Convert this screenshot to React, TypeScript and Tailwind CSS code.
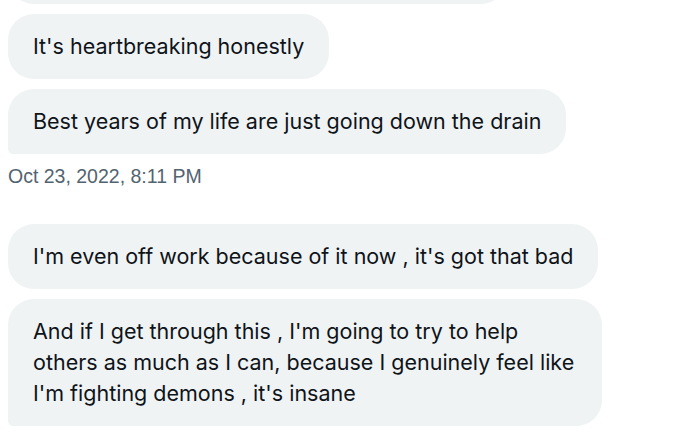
import React from 'react';

type Msg = { text: React.ReactNode; last?: boolean };

function Bubble({ text, last }: Msg) {
  return (
    <div
      className={
        'w-fit max-w-[594px] bg-[#eff3f4] px-[25px] py-[17px] text-[21.5px] leading-[31px] text-[#0f1419] rounded-[26px] ' +
        (last ? 'rounded-bl-[5px]' : '')
      }
    >
      {text}
    </div>
  );
}

export default function App() {
  return (
    <div className="min-h-screen bg-white overflow-hidden" style={{ fontFamily: 'Inter, "Noto Sans", sans-serif' }}>
      <div className="flex flex-col gap-[10px] px-2">
        {/* previous message, cut off at the top */}
        <div className="-mt-[61px] h-[65px] w-[499px] rounded-[26px] bg-[#eff3f4]" />
        <Bubble text="It's heartbreaking honestly" />
        <Bubble text="Best years of my life are just going down the drain" last />
      </div>

      {/* Timestamp */}
      <div className="px-2 pt-[10px] pb-[36px] text-[19.5px] leading-[24px] text-[#536471] font-['Liberation_Sans',sans-serif]">
        Oct 23, 2022, 8:11 PM
      </div>

      <div className="flex flex-col gap-[10px] px-2">
        <Bubble text="I'm even off work because of it now , it's got that bad" />
        <Bubble
          text="And if I get through this , I'm going to try to help others as much as I can, because I genuinely feel like I'm fighting demons , it's insane"
          last
        />
      </div>
    </div>
  );
}
